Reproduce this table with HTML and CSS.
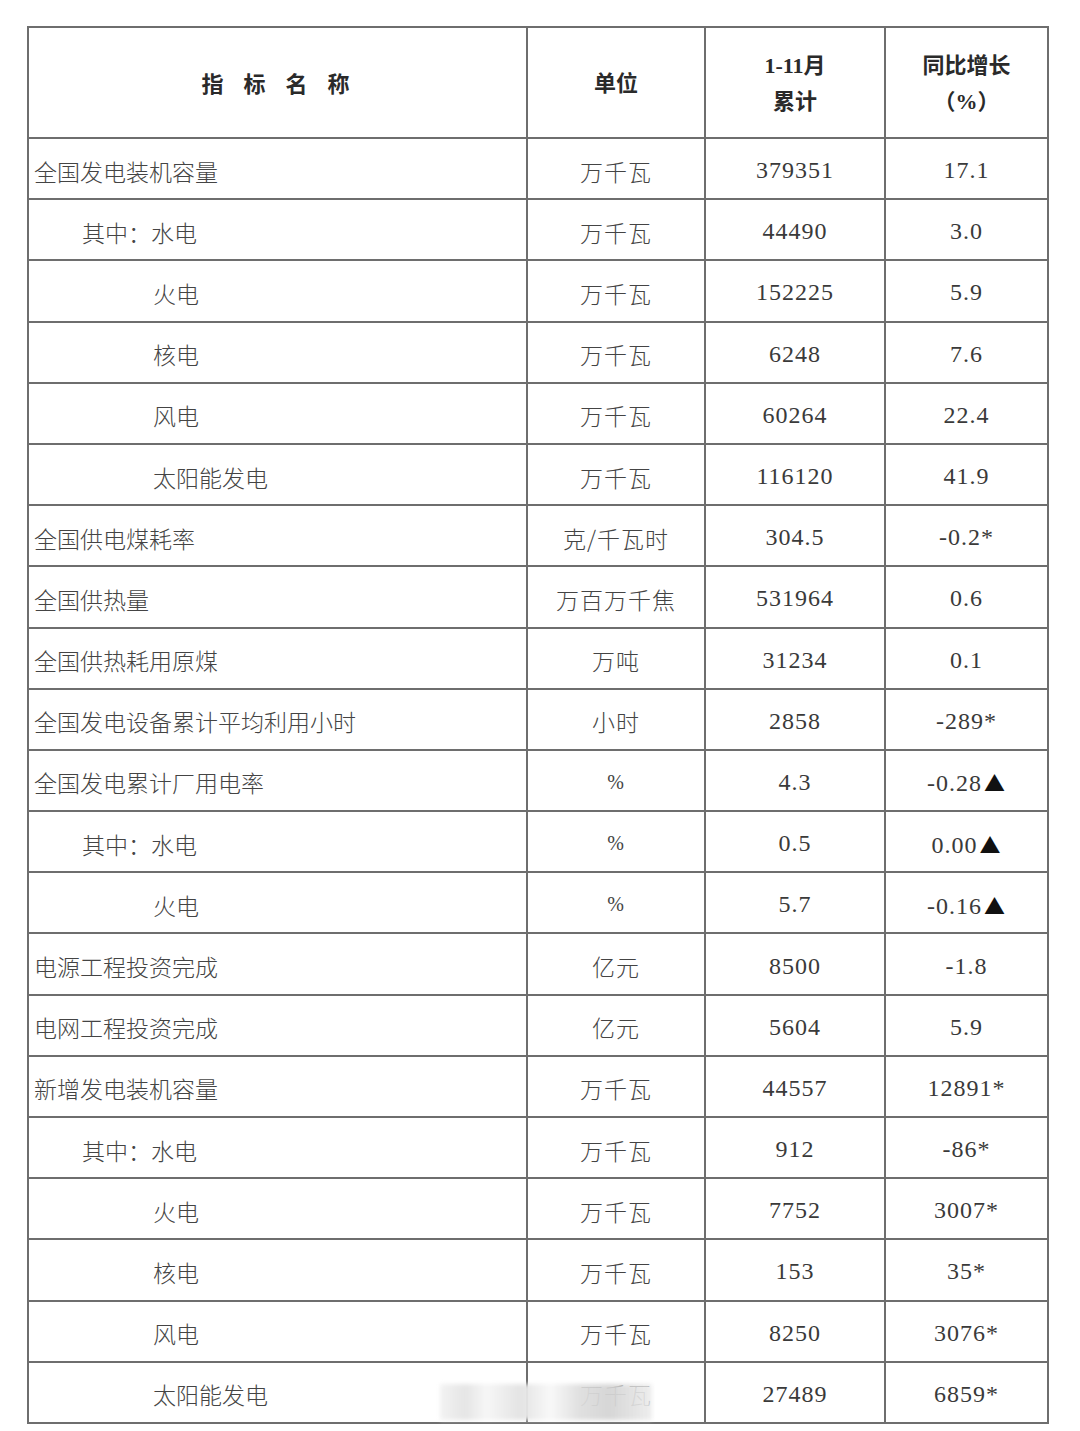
FILE: index.html
```html
<!DOCTYPE html>
<html lang="zh-CN">
<head>
<meta charset="utf-8">
<title>电力工业统计</title>
<link rel="stylesheet" href="styles.css">
</head>
<body>
<div class="page">
<table class="stats">
<colgroup>
<col class="c1"><col class="c2"><col class="c3"><col class="c4">
</colgroup>
<thead>
<tr class="head">
<th><span class="spaced">指 标 名 称</span></th>
<th>单位</th>
<th>1-11月<br>累计</th>
<th>同比增长<br>（%）</th>
</tr>
</thead>
<tbody>
<tr><td class="name">全国发电装机容量</td><td>万千瓦</td><td>379351</td><td>17.1</td></tr>
<tr><td class="name i1">其中：水电</td><td>万千瓦</td><td>44490</td><td>3.0</td></tr>
<tr><td class="name i2">火电</td><td>万千瓦</td><td>152225</td><td>5.9</td></tr>
<tr><td class="name i2">核电</td><td>万千瓦</td><td>6248</td><td>7.6</td></tr>
<tr><td class="name i2">风电</td><td>万千瓦</td><td>60264</td><td>22.4</td></tr>
<tr><td class="name i2">太阳能发电</td><td>万千瓦</td><td>116120</td><td>41.9</td></tr>
<tr><td class="name">全国供电煤耗率</td><td>克/千瓦时</td><td>304.5</td><td>-0.2*</td></tr>
<tr><td class="name">全国供热量</td><td>万百万千焦</td><td>531964</td><td>0.6</td></tr>
<tr><td class="name">全国供热耗用原煤</td><td>万吨</td><td>31234</td><td>0.1</td></tr>
<tr><td class="name">全国发电设备累计平均利用小时</td><td>小时</td><td>2858</td><td>-289*</td></tr>
<tr><td class="name">全国发电累计厂用电率</td><td class="pct">%</td><td>4.3</td><td>-0.28<span class="tri">▲</span></td></tr>
<tr><td class="name i1">其中：水电</td><td class="pct">%</td><td>0.5</td><td>0.00<span class="tri">▲</span></td></tr>
<tr><td class="name i2">火电</td><td class="pct">%</td><td>5.7</td><td>-0.16<span class="tri">▲</span></td></tr>
<tr><td class="name">电源工程投资完成</td><td>亿元</td><td>8500</td><td>-1.8</td></tr>
<tr><td class="name">电网工程投资完成</td><td>亿元</td><td>5604</td><td>5.9</td></tr>
<tr><td class="name">新增发电装机容量</td><td>万千瓦</td><td>44557</td><td>12891*</td></tr>
<tr><td class="name i1">其中：水电</td><td>万千瓦</td><td>912</td><td>-86*</td></tr>
<tr><td class="name i2">火电</td><td>万千瓦</td><td>7752</td><td>3007*</td></tr>
<tr><td class="name i2">核电</td><td>万千瓦</td><td>153</td><td>35*</td></tr>
<tr><td class="name i2">风电</td><td>万千瓦</td><td>8250</td><td>3076*</td></tr>
<tr><td class="name i2">太阳能发电</td><td>万千瓦</td><td>27489</td><td>6859*</td></tr>
</tbody>
</table>
<div class="watermark"></div>
</div>
</body>
</html>
```

FILE: styles.css
```css
html, body {
  margin: 0;
  padding: 0;
  background: #ffffff;
}

.page {
  position: relative;
  padding: 26px 0 0 27px;
}

.stats {
  border-collapse: collapse;
  table-layout: fixed;
  width: 1020px;
  font-family: "Liberation Serif", "Noto Sans CJK SC", serif;
  color: #3a3a3a;
  font-size: 23px;
}

.c1 { width: 499px; }
.c2 { width: 178px; }
.c3 { width: 180px; }
.c4 { width: 163px; }

.stats th,
.stats td {
  border: 2px solid #6e6e6e;
  text-align: center;
  vertical-align: middle;
  padding: 0;
}

.head th {
  height: 107px;
  font-weight: bold;
  font-size: 22px;
  line-height: 36px;
  color: #2a2a2a;
  padding-top: 2px;
}

.spaced {
  font-family: "Noto Sans CJK SC", sans-serif;
  letter-spacing: 4px;
  word-spacing: 7px;
}

.stats tbody td {
  height: 55.2px;
  padding-top: 4px;
  font-size: 24px;
  letter-spacing: 1px;
}

.stats td.name {
  text-align: left;
  padding-left: 5px;
  font-family: "Noto Sans CJK SC", sans-serif;
  font-size: 23px;
  color: #444444;
  font-weight: 300;
  letter-spacing: 0;
}

.stats td:nth-child(2) {
  font-family: "Noto Sans CJK SC", sans-serif;
  font-size: 23px;
  color: #444444;
  font-weight: 300;
  letter-spacing: 1px;
}

.stats td.pct {
  font-family: "Liberation Serif", serif;
  font-size: 20px;
}

.stats td.i1 { padding-left: 53px; }
.stats td.i2 { padding-left: 124px; }

.tri {
  font-family: "Noto Sans CJK SC", sans-serif;
  font-size: 21px;
  color: #111111;
  margin-left: 2px;
}

.watermark {
  position: absolute;
  left: 440px;
  top: 1384px;
  width: 212px;
  height: 36px;
  background:
    linear-gradient(90deg,
      rgba(242,242,242,0.95) 0%,
      rgba(228,228,228,0.95) 12%,
      rgba(246,246,246,0.95) 22%,
      rgba(226,226,226,0.95) 38%,
      rgba(248,248,248,0.95) 52%,
      rgba(222,222,222,0.95) 66%,
      rgba(212,212,212,0.95) 80%,
      rgba(236,236,236,0.9) 100%);
  filter: blur(2px);
}
```
